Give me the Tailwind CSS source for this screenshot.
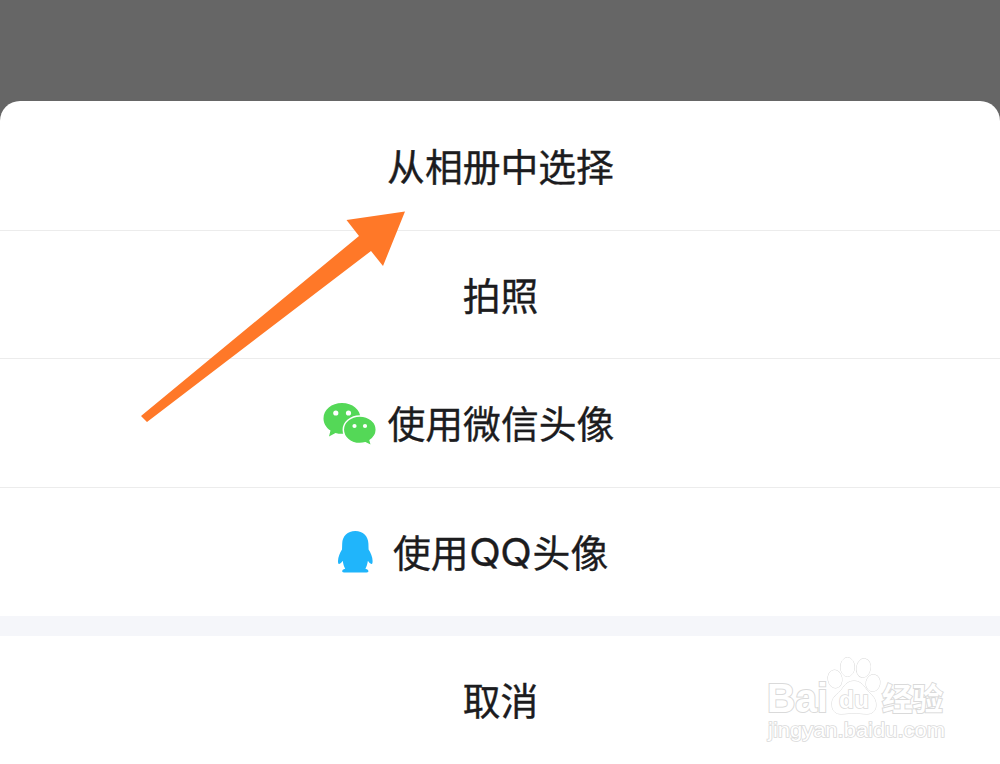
<!DOCTYPE html>
<html lang="zh-CN">
<head>
<meta charset="utf-8">
<title>选择头像</title>
<script src="https://cdn.jsdelivr.net/npm/@tailwindcss/browser@4"></script>
</head>
<body class="bg-[#666666]">
<div class="relative h-[764px] w-[1000px] overflow-hidden pt-[101px] font-['Noto_Sans_CJK_SC',sans-serif] text-[37.8px] leading-none text-[#1c1c1e] [-webkit-text-stroke:0.35px_#1c1c1e]">
  <main class="flex h-[663px] flex-col rounded-t-[20px] bg-white">
    <button class="flex h-[130px] shrink-0 items-center justify-center border-b border-[#ececec] pb-px pl-px">从相册中选择</button>
    <button class="flex h-[128px] shrink-0 items-center justify-center border-b border-[#ececec] pb-px pl-px">拍照</button>
    <button class="flex h-[129px] shrink-0 items-center border-b border-[#ececec] pb-[2px] pl-[322px]">
      <svg class="mt-[4px] h-[46px] w-[56px] shrink-0" viewBox="0 0 56 46" fill="#54d857">
        <path d="M20 2C9.500 2 1.500 8.700 1.500 17.500c0 5 2.700 9.200 7 12L7 35.500l6.500-3.600c2 .6 4.200.9 6.500.9 10.500 0 18.500-6.500 18.500-15.300S30.500 2 20 2Z"/>
        <path stroke="white" stroke-width="1.500" d="M37.800 15c-9.200 0-16.500 6.200-16.500 13.800s7.300 13.800 16.500 13.800c2 0 3.900-.3 5.600-.8l6.300 3.200-1.600-5.700c3.700-2.500 6.200-6.200 6.200-10.500 0-7.600-7.300-13.800-16.500-13.800Z"/>
        <g fill="white"><circle cx="13.800" cy="12" r="2.600"/><circle cx="26.500" cy="12" r="2.600"/><circle cx="32.500" cy="25" r="2.100"/><circle cx="43" cy="25" r="2.100"/></g>
      </svg>
      <span class="ml-[9.500px]">使用微信头像</span>
    </button>
    <button class="flex h-[128px] shrink-0 items-center pb-[3px] pl-[337px]">
      <svg class="mt-[3px] h-[44px] w-[37px] shrink-0" viewBox="0 0 37 44" fill="#20b5fb">
        <path d="M18.300 1C10.500 1 5.500 6 5.200 13.500L5 19.500C3 22.500 1 27 1 31c0 2 .3 3.200 1.200 3 1.200-.3 2.300-1.500 3.500-3.200.5 3.200 1.300 6 2.500 7.900-2.200.5-3 1.500-3 2.500 0 1.100 1.200 1.400 3.200 1.400h19.800c2 0 3.200-.3 3.200-1.400 0-1-.8-2-3-2.500 1.200-1.900 2-4.700 2.500-7.900 1.200 1.700 2.300 2.900 3.500 3.200.9.200 1.200-1 1.200-3 0-4-2-8.500-4-11.500l-.2-6C31.100 6 26.100 1 18.300 1Z"/>
      </svg>
      <span class="ml-[19px] flex items-center">使用<span class="mt-[5px] flex w-[64px] justify-center"><span class="scale-x-110 font-['Inter'] text-[37.500px] tracking-[-0.5px]">QQ</span></span>头像</span>
    </button>
    <div class="h-5 shrink-0 bg-[#f5f6fa]"></div>
    <button class="flex h-[128px] shrink-0 items-center justify-center pb-[2px] pl-px">取消</button>
  </main>

  <svg class="pointer-events-none absolute inset-0 [-webkit-text-stroke:0]" width="1000" height="764" viewBox="0 0 1000 764">
    <path fill="#ff7828" d="M141 416 359 236 346.500 220 405 211.500 383 266 371 251 147 422Z"/>
    <g fill="white" stroke="#dadada" stroke-width="1" paint-order="stroke">
      <text x="767" y="712" font-family="Liberation Sans" font-weight="bold" font-size="40" textLength="61" lengthAdjust="spacingAndGlyphs" style="stroke-width:2">Bai</text>
      <ellipse cx="835" cy="679" rx="7" ry="9" transform="rotate(-10 835 679)"/>
      <ellipse cx="847.500" cy="667" rx="7" ry="9.500"/>
      <ellipse cx="863.500" cy="668" rx="7" ry="9.500" transform="rotate(10 863.500 668)"/>
      <ellipse cx="873" cy="683" rx="7" ry="8.500" transform="rotate(12 873 683)"/>
      <path d="M854 681c-5 0-9 3-12 8-4 5-11 8-10 16 0 6 4 9 9 9 5 0 9-1 13-1s8 1 13 1c5 0 9-3 9-9 0-8-6-11-10-16-3-5-7-8-12-8Z"/>
      <text x="839" y="708" font-family="Liberation Sans" font-weight="bold" font-size="23" textLength="30" lengthAdjust="spacingAndGlyphs" style="stroke-width:1.500">du</text>
      <text x="882" y="710" font-family="Noto Sans CJK SC" font-weight="700" font-size="31" textLength="61" lengthAdjust="spacingAndGlyphs" style="stroke-width:2">经验</text>
      <text x="768" y="737" font-family="Liberation Sans" font-weight="400" font-size="20" textLength="177" lengthAdjust="spacingAndGlyphs" style="stroke-width:1.600">jingyan.baidu.com</text>
    </g>
  </svg>
</div>
</body>
</html>
